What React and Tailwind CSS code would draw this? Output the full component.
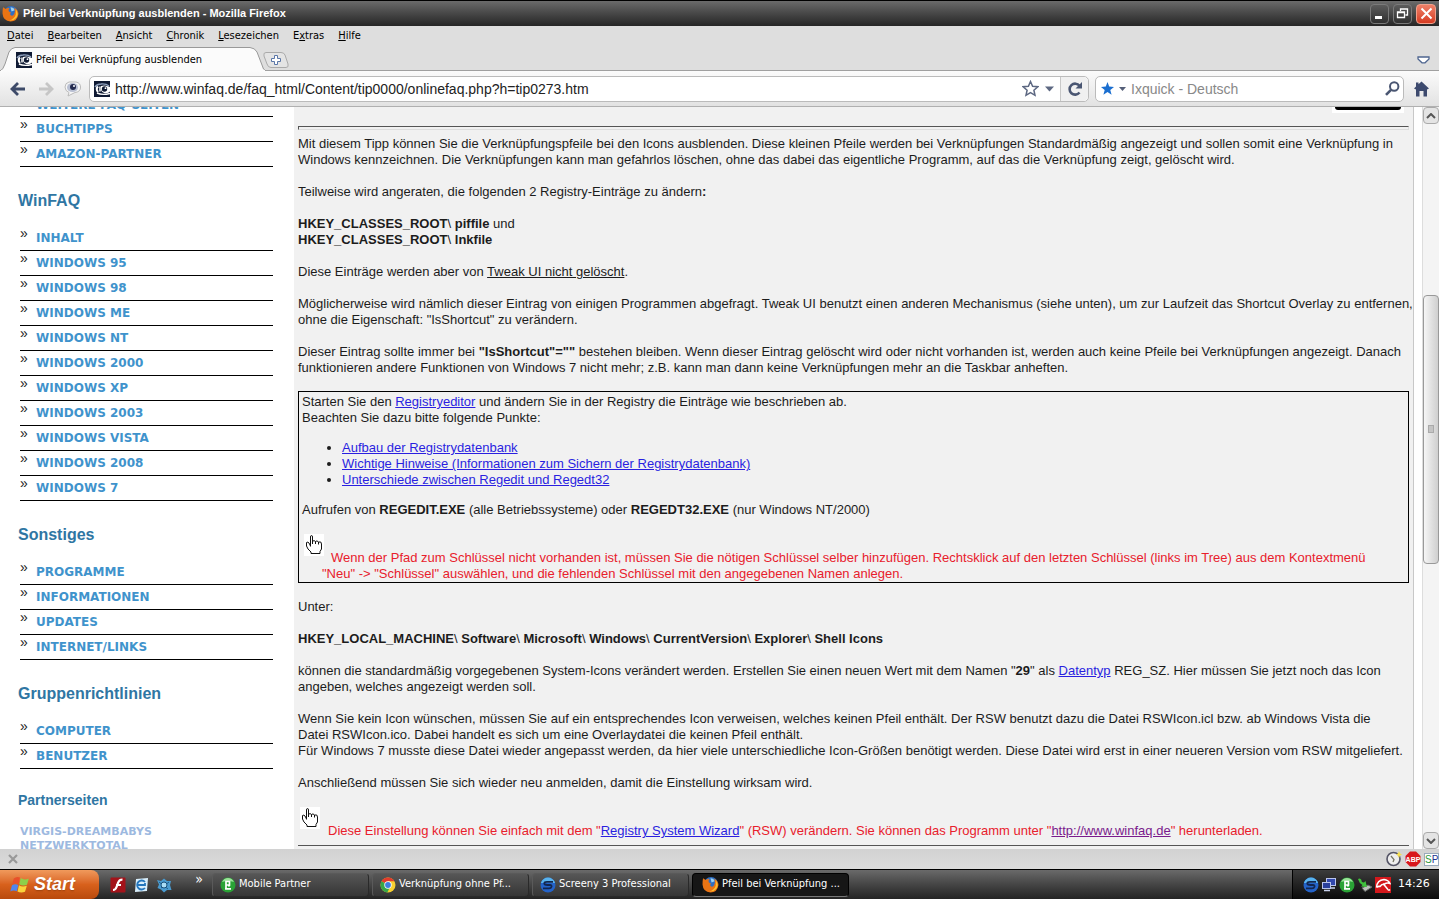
const Eye = () => (
  <svg width="16" height="16" viewBox="0 0 16 16" className="shrink-0" aria-hidden="true">
    <rect width="16" height="16" fill="#0f1a33" />
    <path d="M1 6 Q3 3 7 3 Q12 2.500 15 5" stroke="#8fa0bd" strokeWidth="1.400" fill="none" />
    <path d="M4 5.500 Q1.500 8 4 11" stroke="#fff" strokeWidth="2" fill="none" />
    <path d="M6 5.500 V10.500" stroke="#fff" strokeWidth="1.500" />
    <path d="M7 5 Q11 3.500 16 6 V10.500 Q14 13 10 12 Q7.500 11 7 9 Z" fill="#fff" />
    <circle cx="10.500" cy="8" r="2.700" fill="#0f1a33" />
    <circle cx="11.500" cy="7.200" r="0.900" fill="#fff" />
    <path d="M3 12 Q8 14.500 16 12.500" stroke="#fff" strokeWidth="1.400" fill="none" />
  </svg>
)

const Firefox = () => (
  <svg width="17" height="17" viewBox="0 0 16 16" className="shrink-0" aria-hidden="true">
    <circle cx="8.500" cy="7.500" r="6.500" fill="#2f6fc4" />
    <path d="M8 2 Q11 2 12 5 L9 6 Z" fill="#9bd3f5" />
    <path d="M1 2 L3.500 3.800 Q5 2.600 7 3 Q5.500 4.500 6.500 6 L8.500 7 Q7 8.500 8 9.500 Q10 11 11.500 8.500 Q13 6 11.500 2.500 Q15.500 4.500 15.500 8.500 Q14.500 15.500 8 15.500 Q1 15 0.500 8 Q0.500 4 1 2 Z" fill="#ea7414" />
    <path d="M13 4 Q16 8 13.500 12 Q11 15 7 14.500 Q12 13 13 9 Z" fill="#fdc02f" />
  </svg>
)

const Screeny = () => (
  <svg width="16" height="16" viewBox="0 0 16 16" className="shrink-0" aria-hidden="true">
    <circle cx="8" cy="8" r="7.500" fill="#2463c9" />
    <path d="M0.800 6 Q3 0.500 8 0.500 Q13 0.500 15.200 6 Z" fill="#58b3ee" />
    <path d="M13 4.800 H7 Q4 4.800 4.300 6.500 Q4.600 8 7.500 8 H10 Q12 8.200 11.500 9.700 Q11 11.300 9 11.300 H3" stroke="#12264f" strokeWidth="1.800" fill="none" />
  </svg>
)

const Partner = () => (
  <svg width="16" height="16" viewBox="0 0 16 16" className="shrink-0" aria-hidden="true">
    <circle cx="8" cy="8" r="7.500" fill="#2aa336" />
    <path d="M2 5 Q4 1 8 1 Q12 1 14 5 Q8 3 2 5" fill="#9be39a" />
    <path d="M6 11.500 V4.500 H9.500 V8 H6.500 M8.500 8 L9.500 9.500 M5 11.800 H11" stroke="#fff" strokeWidth="1.700" fill="none" />
  </svg>
)

const Chrome = () => (
  <svg width="16" height="16" viewBox="0 0 16 16" className="shrink-0" aria-hidden="true">
    <circle cx="8" cy="8" r="7.500" fill="#f7cf31" />
    <path d="M8 8 L1.500 4.200 A7.500 7.500 0 0 1 14.500 4.300 H8 Z" fill="#e23b2c" />
    <path d="M8 8 L1.500 4.200 A7.500 7.500 0 0 0 7.300 15.400 L10 10 Z" fill="#37a748" />
    <circle cx="8" cy="8" r="3.700" fill="#fff" />
    <circle cx="8" cy="8" r="2.900" fill="#3f7fdc" />
  </svg>
)

const Hand = () => (
  <svg width="20" height="22" viewBox="0 0 20 22" className="shrink-0" aria-hidden="true">
    <rect width="20" height="22" fill="#fff" />
    <path
      d="M6.500 12.500 V3 Q6.500 1.500 7.500 1.500 Q8.500 1.500 8.500 3 V10 M8.500 7.500 Q10 5.500 11.500 7.500 V10 M11.500 7.500 Q13 6 14.500 8 V10.500 M14.500 8 Q17.500 7 17.500 10 V15 L16 17.500 V19.500 H7 V18 L4 15 L2.500 12 V8.500 Q4 7.500 5 9 L6.500 12"
      fill="none"
      stroke="#111"
    />
  </svg>
)

const menus = [
  ['', 'D', 'atei'],
  ['', 'B', 'earbeiten'],
  ['', 'A', 'nsicht'],
  ['', 'C', 'hronik'],
  ['', 'L', 'esezeichen'],
  ['E', 'x', 'tras'],
  ['', 'H', 'ilfe'],
]

const sections = [
  {
    title: 'WinFAQ',
    items: [
      'INHALT',
      'WINDOWS 95',
      'WINDOWS 98',
      'WINDOWS ME',
      'WINDOWS NT',
      'WINDOWS 2000',
      'WINDOWS XP',
      'WINDOWS 2003',
      'WINDOWS VISTA',
      'WINDOWS 2008',
      'WINDOWS 7',
    ],
  },
  { title: 'Sonstiges', items: ['PROGRAMME', 'INFORMATIONEN', 'UPDATES', 'INTERNET/LINKS'] },
  { title: 'Gruppenrichtlinien', items: ['COMPUTER', 'BENUTZER'] },
]

const NavItem = ({ label }) => (
  <li className="flex h-[25px] border-b border-black">
    <span className="w-4 text-[14px] leading-[14px] text-[#222]">»</span>
    <a href="#" className="font-['DejaVu_Sans'] text-[12px] leading-[25px] font-bold text-[#3f93cc]">
      {label}
    </a>
  </li>
)

const Sidebar = () => (
  <nav className="w-[294px] shrink-0 pl-5 pr-[21px]">
    <div className="flex h-[10px] items-end overflow-hidden border-b border-black pl-4">
      <a href="#" className="mb-[5px] font-['DejaVu_Sans'] text-[12px] leading-3 font-bold text-[#3f93cc]">
        WEITERE FAQ-SEITEN
      </a>
    </div>
    <ul>
      <NavItem label="BUCHTIPPS" />
      <NavItem label="AMAZON-PARTNER" />
    </ul>
    {sections.map((s) => (
      <section key={s.title}>
        <h2 className="-ml-[2px] pt-6 pb-[15px] text-[16px] leading-5 font-bold text-[#2f76a3]">{s.title}</h2>
        <ul>
          {s.items.map((i) => (
            <NavItem key={i} label={i} />
          ))}
        </ul>
      </section>
    ))}
    <h2 className="-ml-[2px] pt-[21px] pb-[15px] text-[14px] leading-5 font-bold text-[#2f76a3]">Partnerseiten</h2>
    <ul className="font-['DejaVu_Sans'] text-[11px] leading-[14px] font-bold text-[#9db9e0]">
      <li><a href="#">VIRGIS-DREAMBABYS</a></li>
      <li><a href="#">NETZWERKTOTAL</a></li>
    </ul>
  </nav>
)

const Link = ({ children }) => (
  <a href="#" className="text-[#2a1fe0] underline">{children}</a>
)

const Article = () => (
  <main className="min-w-0 flex-1 border-r border-[#c8c8c8] bg-[#f1f1f1] pr-1 pl-1 text-[13px] leading-4 whitespace-nowrap text-[#1c1c1c]">
    <div className="flex h-[19px] items-start justify-end">
      <div className="mr-[5px] bg-white px-[3px] pb-[3px]">
        <div className="h-[3px] w-[66px] rounded-b-sm bg-black" />
      </div>
    </div>
    <hr className="mb-[6px] h-[4px] border border-[#555] border-r-[#ddd] border-b-[#ddd]" />
    <p className="mb-4">
      Mit diesem Tipp können Sie die Verknüpfungspfeile bei den Icons ausblenden. Diese kleinen Pfeile werden bei Verknüpfungen Standardmäßig angezeigt und sollen somit eine Verknüpfung in<br />
      Windows kennzeichnen. Die Verknüpfungen kann man gefahrlos löschen, ohne das dabei das eigentliche Programm, auf das die Verknüpfung zeigt, gelöscht wird.
    </p>
    <p className="mb-4">Teilweise wird angeraten, die folgenden 2 Registry-Einträge zu ändern<b>:</b></p>
    <p className="mb-4">
      <b>HKEY_CLASSES_ROOT</b>\ <b>piffile</b> und<br />
      <b>HKEY_CLASSES_ROOT</b>\ <b>lnkfile</b>
    </p>
    <p className="mb-4">Diese Einträge werden aber von <u>Tweak UI nicht gelöscht</u>.</p>
    <p className="mb-4">
      Möglicherweise wird nämlich dieser Eintrag von einigen Programmen abgefragt. Tweak UI benutzt einen anderen Mechanismus (siehe unten), um zur Laufzeit das Shortcut Overlay zu entfernen,<br />
      ohne die Eigenschaft: "IsShortcut" zu verändern.
    </p>
    <p className="mb-[15px]">
      Dieser Eintrag sollte immer bei <b>"IsShortcut"=""</b> bestehen bleiben. Wenn dieser Eintrag gelöscht wird oder nicht vorhanden ist, werden auch keine Pfeile bei Verknüpfungen angezeigt. Danach<br />
      funktionieren andere Funktionen von Windows 7 nicht mehr; z.B. kann man dann keine Verknüpfungen mehr an die Taskbar anheften.
    </p>
    <div className="mb-4 border border-black px-[3px] pt-[2px]">
      <p>
        Starten Sie den <Link>Registryeditor</Link> und ändern Sie in der Registry die Einträge wie beschrieben ab.<br />
        Beachten Sie dazu bitte folgende Punkte:
      </p>
      <ul className="my-[14px] list-disc pl-10">
        <li><Link>Aufbau der Registrydatenbank</Link></li>
        <li><Link>Wichtige Hinweise (Informationen zum Sichern der Registrydatenbank)</Link></li>
        <li><Link>Unterschiede zwischen Regedit und Regedt32</Link></li>
      </ul>
      <p>Aufrufen von <b>REGEDIT.EXE</b> (alle Betriebssysteme) oder <b>REGEDT32.EXE</b> (nur Windows NT/2000)</p>
      <div className="flex pt-4 pl-[2px] text-[#e8202c]">
        <Hand />
        <p className="-ml-[2px] pt-4">
          <span className="pl-[9px]">Wenn der Pfad zum Schlüssel nicht vorhanden ist, müssen Sie die nötigen Schlüssel selber hinzufügen. Rechtsklick auf den letzten Schlüssel (links im Tree) aus dem Kontextmenü</span><br />
          "Neu" -&gt; "Schlüssel" auswählen, und die fehlenden Schlüssel mit den angegebenen Namen anlegen.
        </p>
      </div>
    </div>
    <p className="mb-4">Unter:</p>
    <p className="mb-4">
      <b>HKEY_LOCAL_MACHINE</b>\ <b>Software</b>\ <b>Microsoft</b>\ <b>Windows</b>\ <b>CurrentVersion</b>\ <b>Explorer</b>\ <b>Shell Icons</b>
    </p>
    <p className="mb-4">
      können die standardmäßig vorgegebenen System-Icons verändert werden. Erstellen Sie einen neuen Wert mit dem Namen "<b>29</b>" als <Link>Datentyp</Link> REG_SZ. Hier müssen Sie jetzt noch das Icon<br />
      angeben, welches angezeigt werden soll.
    </p>
    <p className="mb-4">
      Wenn Sie kein Icon wünschen, müssen Sie auf ein entsprechendes Icon verweisen, welches keinen Pfeil enthält. Der RSW benutzt dazu die Datei RSWIcon.icl bzw. ab Windows Vista die<br />
      Datei RSWIcon.ico. Dabei handelt es sich um eine Overlaydatei die keinen Pfeil enthält.<br />
      Für Windows 7 musste diese Datei wieder angepasst werden, da hier viele unterschiedliche Icon-Größen benötigt werden. Diese Datei wird erst in einer neueren Version vom RSW mitgeliefert.
    </p>
    <p className="mb-4">Anschließend müssen Sie sich wieder neu anmelden, damit die Einstellung wirksam wird.</p>
    <div className="mb-[6px] flex pl-[2px] text-[#e8202c]">
      <Hand />
      <p className="pt-4 pl-2">
        Diese Einstellung können Sie einfach mit dem "<Link>Registry System Wizard</Link>" (RSW) verändern. Sie können das Programm unter "<a href="#" className="text-[#7a1a8c] underline">http://www.winfaq.de</a>" herunterladen.
      </p>
    </div>
    <hr className="border-[#555]" />
  </main>
)

const Scrollbar = () => (
  <div className="ml-2 flex w-[17px] shrink-0 flex-col justify-between border-l border-[#ddd] bg-[#f4f4f4]">
    <button aria-label="Nach oben" className="flex h-[17px] items-center justify-center rounded-sm border border-[#aaa] bg-[#e4e4e4]">
      <svg width="10" height="6" viewBox="0 0 10 6"><path d="M1 5 L5 1 L9 5" stroke="#555" strokeWidth="2" fill="none" /></svg>
    </button>
    <div className="flex flex-1 flex-col">
      <div className="flex-[171]" />
      <div className="flex flex-[268] items-center justify-center rounded-sm border border-[#999] bg-linear-to-r from-[#f6f6f6] via-[#e2e2e2] to-[#cfcfcf]">
        <div className="h-2 w-[6px] border border-[#aaa] bg-[#c4c4c4]" />
      </div>
      <div className="flex-[269]" />
    </div>
    <button aria-label="Nach unten" className="flex h-[17px] items-center justify-center rounded-sm border border-[#aaa] bg-[#e4e4e4]">
      <svg width="10" height="6" viewBox="0 0 10 6"><path d="M1 1 L5 5 L9 1" stroke="#555" strokeWidth="2" fill="none" /></svg>
    </button>
  </div>
)

const TitleBar = () => (
  <header className="flex h-[26px] shrink-0 items-center gap-1 border-t border-black bg-linear-to-b from-[#6b6b6b] via-[#474747] to-[#262626] pr-[3px] pl-[2px]">
    <Firefox />
    <h1 className="flex-1 text-[11px] font-bold text-white">
      Pfeil bei Verknüpfung ausblenden - Mozilla Firefox
    </h1>
    <button aria-label="Minimieren" className="flex h-5 w-[19px] items-center justify-center rounded-sm border border-[#7a7a7a] bg-linear-to-b from-[#5c5c5c] to-[#303030]">
      <svg width="13" height="13" viewBox="0 0 13 13"><path d="M2 10.500 H9" stroke="#fff" strokeWidth="3" /></svg>
    </button>
    <button aria-label="Verkleinern" className="flex h-5 w-[19px] items-center justify-center rounded-sm border border-[#7a7a7a] bg-linear-to-b from-[#5c5c5c] to-[#303030]">
      <svg width="13" height="13" viewBox="0 0 13 13"><path d="M4.500 4 V2 H11.500 V8 H9.500 M1.500 5 H8.500 V10.500 H1.500 Z M1 5.500 H9 M4 2.200 H12" stroke="#fff" strokeWidth="1.300" fill="none" /></svg>
    </button>
    <button aria-label="Schließen" className="flex h-5 w-5 items-center justify-center rounded-sm border border-[#f0a08c] bg-linear-to-b from-[#ee8068] to-[#d63a20]">
      <svg width="13" height="13" viewBox="0 0 13 13"><path d="M1.500 1.500 L11.500 11.500 M11.500 1.500 L1.500 11.500" stroke="#fff" strokeWidth="2" /></svg>
    </button>
  </header>
)

const Tabs = () => (
  <div className="flex h-6 shrink-0 items-end border-b border-[#a0a0a0] bg-[#dedede]">
    <div className="relative -mb-px flex h-6 w-[266px] items-center">
      <svg className="absolute inset-0" width="266" height="24" viewBox="0 0 266 24" aria-hidden="true">
        <path d="M0 24 Q3 23 5 17 L9 5 Q11 1 15 0.500 H250 Q255 1 257 5 L262 18 Q263 23 266 24" fill="#fbfbfb" stroke="#999" />
        <path d="M1 24 H265" stroke="#fbfbfb" strokeWidth="2" />
      </svg>
      <button className="relative flex items-center gap-1 pt-[2px] pl-4 font-['DejaVu_Sans_Condensed'] text-[11px]">
        <Eye />
        Pfeil bei Verknüpfung ausblenden
      </button>
    </div>
    <button aria-label="Neuer Tab" className="mb-[2px] -ml-[3px]">
      <svg width="26" height="16" viewBox="0 0 26 16">
        <path d="M3 0.500 H18 Q21 0.500 22 3 L25 12 Q26 15.500 23 15.500 H8 Q5 15.500 4 12 L1 4 Q0 0.500 3 0.500" fill="#e4e4e4" stroke="#aaa" />
        <path d="M11.500 3.500 H14.500 V6.500 H17.500 V9.500 H14.500 V12.500 H11.500 V9.500 H8.500 V6.500 H11.500 Z" fill="#fff" stroke="#5b77a8" />
      </svg>
    </button>
    <button aria-label="Alle Tabs" className="mr-[9px] mb-[6px] ml-auto">
      <svg width="13" height="8" viewBox="0 0 13 8" className="block"><path d="M1 1 H12 V3 L8 6.800 H5 L1 3 Z" fill="#fff" stroke="#4f6690" strokeWidth="1.300" /></svg>
    </button>
  </div>
)

const Toolbar = () => (
  <div className="flex h-9 shrink-0 items-center border-b border-[#b0b0b0] bg-linear-to-b from-[#fbfbfb] to-[#e2e2e2] pr-[10px] pl-[10px]">
    <button aria-label="Zurück">
      <svg width="15" height="14" viewBox="0 0 15 14"><path d="M8 1 L2 7 L8 13 M2 7 H15" stroke="#3d4a68" strokeWidth="2.800" fill="none" /></svg>
    </button>
    <button aria-label="Vor" className="ml-[14px]">
      <svg width="15" height="14" viewBox="0 0 15 14"><path d="M7 1 L13 7 L7 13 M13 7 H0" stroke="#c6c6c6" strokeWidth="2.800" fill="none" /></svg>
    </button>
    <button aria-label="Verlauf" className="mr-[7px] ml-[10px]">
      <svg width="18" height="16" viewBox="0 0 18 16">
        <path d="M5 1 H12 Q17 2 16.500 7 Q16 11 11 11.500 L4 15 L5 11.500 Q1 10 1 6 Q1 2 5 1" fill="#f6f6f6" stroke="#bbb" />
        <ellipse cx="8.500" cy="6.500" rx="5.500" ry="4.500" fill="#b8bfd2" />
        <circle cx="9" cy="6" r="3" fill="#252c50" />
        <circle cx="10" cy="5" r="1" fill="#fff" />
      </svg>
    </button>
    <div className="flex h-[26px] flex-1 items-center rounded-[5px] border border-[#bbb] bg-white pl-1">
      <Eye />
      <input
        aria-label="Adresse"
        className="h-full min-w-0 flex-1 px-[5px] pt-px text-[14px] text-[#222] outline-none"
        defaultValue="http://www.winfaq.de/faq_html/Content/tip0000/onlinefaq.php?h=tip0273.htm"
      />
      <button aria-label="Lesezeichen" className="mr-[6px] flex items-center gap-[6px]">
        <svg width="17" height="17" viewBox="0 0 17 17"><path d="M8.500 1.500 L10.600 6.200 L15.800 6.700 L11.900 10.200 L13 15.300 L8.500 12.700 L4 15.300 L5.100 10.200 L1.200 6.700 L6.400 6.200 Z" fill="#fff" stroke="#5d6882" strokeWidth="1.500" /></svg>
        <svg width="9" height="6" viewBox="0 0 9 6"><path d="M0 0.500 H9 L4.500 5.500 Z" fill="#5d6882" /></svg>
      </button>
      <button aria-label="Neu laden" className="flex h-full w-7 items-center justify-center rounded-r-[5px] border-l border-[#c8c8c8] bg-[#f0f0f0]">
        <svg width="16" height="16" viewBox="0 0 16 16"><path d="M12.500 11.500 A5.500 5.500 0 1 1 12.500 4.800" stroke="#4a5672" strokeWidth="2.600" fill="none" /><path d="M15 1 V7.500 H8.500 Z" fill="#4a5672" /></svg>
      </button>
    </div>
    <div className="ml-[6px] flex h-[26px] w-[309px] items-center rounded-[5px] border border-[#bbb] bg-white pr-[3px] pl-1">
      <button aria-label="Suchmaschine" className="flex items-center gap-[5px] pl-px">
        <svg width="13" height="13" viewBox="0 0 13 13"><path d="M6.500 0 L8.200 4.600 L13 4.900 L9.300 7.900 L10.600 12.700 L6.500 10 L2.400 12.700 L3.700 7.900 L0 4.900 L4.800 4.600 Z" fill="#1b6fd0" /></svg>
        <svg width="7" height="4" viewBox="0 0 7 4"><path d="M0 0 H7 L3.500 4 Z" fill="#555f78" /></svg>
      </button>
      <input aria-label="Suche" placeholder="Ixquick - Deutsch" className="h-full min-w-0 flex-1 pt-px pl-[5px] text-[14px] outline-none placeholder:text-[#888]" />
      <button aria-label="Suchen">
        <svg width="15" height="15" viewBox="0 0 15 15"><circle cx="9.200" cy="5.500" r="4.200" fill="none" stroke="#4a5672" strokeWidth="2" /><path d="M6 8.800 L1 13.800" stroke="#4a5672" strokeWidth="2.600" /></svg>
      </button>
    </div>
    <button aria-label="Startseite" className="ml-[10px]">
      <svg width="15" height="16" viewBox="0 0 15 16"><path d="M7.500 0.500 L15 7.500 L13 8.500 V15.500 H9.500 V10 H5.500 V15.500 H2 V8.500 L0 7.500 L2 5.500 V1.500 H4.500 V3.300 Z" fill="#3d4a6e" /></svg>
    </button>
  </div>
)

const StatusBar = () => (
  <div className="flex h-5 shrink-0 items-center gap-[3px] bg-linear-to-b from-[#d2d2d2] to-[#dcdcdc] pl-2">
    <button aria-label="Leiste schließen" className="mr-auto">
      <svg width="10" height="10" viewBox="0 0 10 10"><path d="M1 1 L9 9 M9 1 L1 9" stroke="#999" strokeWidth="2.200" /></svg>
    </button>
    <svg width="16" height="16" viewBox="0 0 16 16" aria-hidden="true">
      <circle cx="7.500" cy="8" r="6.500" fill="#eee" stroke="#556" strokeWidth="1.600" />
      <path d="M5 5 L8 8.500 L7 11" stroke="#776" strokeWidth="1.300" fill="none" />
      <path d="M13 0 L14 2.500 L16 3.500 L14 4.500 L13 7 L12 4.500 L10 3.500 L12 2.500 Z" fill="#f8e04c" />
    </svg>
    <svg width="16" height="16" viewBox="0 0 16 16" aria-hidden="true">
      <path d="M5 0.500 H11 L15.500 5 V11 L11 15.500 H5 L0.500 11 V5 Z" fill="#d8161c" />
      <text x="8" y="11" textAnchor="middle" fontSize="7" fontWeight="bold" fill="#fff">ABP</text>
    </svg>
    <span className="w-[15px] border border-[#9ab] bg-white text-center text-[10px] leading-[11px] text-[#22338f]">
      <span className="text-[#2b9a3b]">S</span>P
    </span>
  </div>
)

const Task = ({ icon, label, active }) => (
  <button
    className={
      active
        ? 'flex h-6 w-[157px] items-center gap-[3px] rounded-sm border border-black border-b-[#777] bg-[#161616] pl-[9px] text-[11px] text-white'
        : 'flex h-6 w-[157px] items-center gap-[3px] rounded-sm border border-[#5a5a5a] border-r-[#2a2a2a] border-b-[#2a2a2a] bg-linear-to-b from-[#565656] to-[#363636] pl-[7px] text-[11px] text-white'
    }
  >
    {icon}
    {label}
  </button>
)

const TaskBar = () => (
  <footer className="flex h-[30px] shrink-0 items-center border-t border-black bg-linear-to-b from-[#6a6a6a] via-[#454545] to-[#242424] font-['DejaVu_Sans_Condensed']">
    <button className="mr-[11px] flex h-full w-[99px] items-center gap-[5px] rounded-r-lg bg-linear-to-b from-[#f09a5c] via-[#d8611c] to-[#b94a0c] pl-[10px] font-['Liberation_Sans'] text-[18px] font-bold text-white italic text-shadow-sm">
      <svg width="19" height="17" viewBox="0 0 19 17" aria-hidden="true">
        <path d="M3.800 2.500 Q6.500 0 10 1.500 L8.500 8 Q5.500 6.500 2.200 8.500 Z" fill="#e8502a" />
        <path d="M10.800 2 Q14 4.500 18.800 2.500 L17 8.800 Q13 10.500 9.200 8.300 Z" fill="#8ed04a" />
        <path d="M2 9.300 Q5 7.500 8.300 9 L6.800 15.300 Q3.500 13.500 0.300 15.500 Z" fill="#4f86ee" />
        <path d="M9 9.300 Q12.500 11.500 16.800 9.700 L15 15.800 Q11 17.500 7.500 15.500 Z" fill="#fad43c" />
      </svg>
      Start
    </button>
    <div className="mr-[9px] flex w-[93px] items-center gap-[7px]">
      <svg width="16" height="16" viewBox="0 0 16 16" aria-hidden="true">
        <rect width="15" height="15" x="0.500" y="0.500" rx="1" fill="#a3131a" />
        <path d="M12.500 2.500 Q9 2.500 8 6 L6.500 10 Q5.500 13 3 13 M6 8 H11" stroke="#fff" strokeWidth="2.200" fill="none" />
      </svg>
      <svg width="16" height="16" viewBox="0 0 16 16" aria-hidden="true">
        <path d="M3 2 L15 1 L14 14 L2 15 Z" fill="#d9effc" />
        <path d="M12 5 A4.500 4.500 0 1 0 12 11 M4 8 H12 V6" stroke="#2476bd" strokeWidth="1.800" fill="none" />
      </svg>
      <svg width="16" height="16" viewBox="0 0 16 16" aria-hidden="true">
        <path d="M1 3 L5 4 L8 1.500 L11 4 L15 4 L14 8 L15.500 13 L11 13 L8 15.500 L5 12.500 L1.500 11 L3 7.500 Z" fill="#4a9bd0" />
        <path d="M3 5 L12 12 M13 5 L5 11" stroke="#1d5f8e" />
        <circle cx="8" cy="8" r="3" fill="#a9dcf5" stroke="#17507c" />
      </svg>
      <span className="ml-auto pb-3 text-[14px] leading-3 text-white">»</span>
    </div>
    <div className="flex gap-[3px]">
      <Task icon={<Partner />} label="Mobile Partner" />
      <Task icon={<Chrome />} label="Verknüpfung ohne Pf..." />
      <Task icon={<Screeny />} label="Screeny 3 Professional" />
      <Task icon={<Firefox />} label="Pfeil bei Verknüpfung ..." active />
    </div>
    <div className="ml-auto flex h-full w-[147px] items-center gap-[2px] border-l border-black bg-linear-to-b from-[#3c3c3c] to-[#0c0c0c] pl-[10px] text-[11px] text-white">
      <Screeny />
      <svg width="16" height="16" viewBox="0 0 16 16" aria-hidden="true">
        <rect x="5.500" y="1.500" width="9" height="7" fill="#3248ae" stroke="#b9c4ec" />
        <rect x="1.500" y="5.500" width="8" height="6" fill="#2a3f9c" stroke="#b9c4ec" />
        <path d="M3 13.500 H9 M10 11 H14" stroke="#c9d2ee" strokeWidth="1.500" />
      </svg>
      <Partner />
      <svg width="16" height="16" viewBox="0 0 16 16" aria-hidden="true">
        <path d="M5 11 L11 8 L15 10 L8 14.500 Z" fill="#b9c2b9" stroke="#666" />
        <path d="M1 2 Q3 0.500 4.500 3 Q4 5 7 5.500 L8.500 4 L10 10 L4 9.500 L5.500 8 Q2 6 1 2 Z" fill="#3fc23c" />
      </svg>
      <svg width="16" height="16" viewBox="0 0 16 16" aria-hidden="true">
        <rect width="16" height="16" fill="#d3181c" />
        <path d="M1.500 10.500 Q2 3 9 2.500 Q13.500 3 15 6.500 Q12 5.500 9.500 7 Q6.500 7 5 9.500 Q3 9 1.500 10.500 M8 6.500 L12.500 12 Q13.500 14 15 12.500" fill="none" stroke="#fff" strokeWidth="1.500" />
      </svg>
      <span className="ml-[5px] font-['DejaVu_Sans'] text-[11px]">14:26</span>
    </div>
  </footer>
)

export default function App() {
  return (
    <div className="flex h-screen flex-col overflow-hidden bg-white font-['Liberation_Sans',sans-serif]">
      <TitleBar />
      <div className="flex h-[21px] shrink-0 items-center gap-[14px] bg-[#dedede] pl-[7px] text-[11px] text-black font-['DejaVu_Sans_Condensed']">
        {menus.map(([a, k, b]) => (
          <button key={k}>{a}<u>{k}</u>{b}</button>
        ))}
      </div>
      <Tabs />
      <Toolbar />
      <div className="flex min-h-0 flex-1 overflow-hidden">
        <Sidebar />
        <Article />
        <Scrollbar />
      </div>
      <StatusBar />
      <TaskBar />
    </div>
  )
}
